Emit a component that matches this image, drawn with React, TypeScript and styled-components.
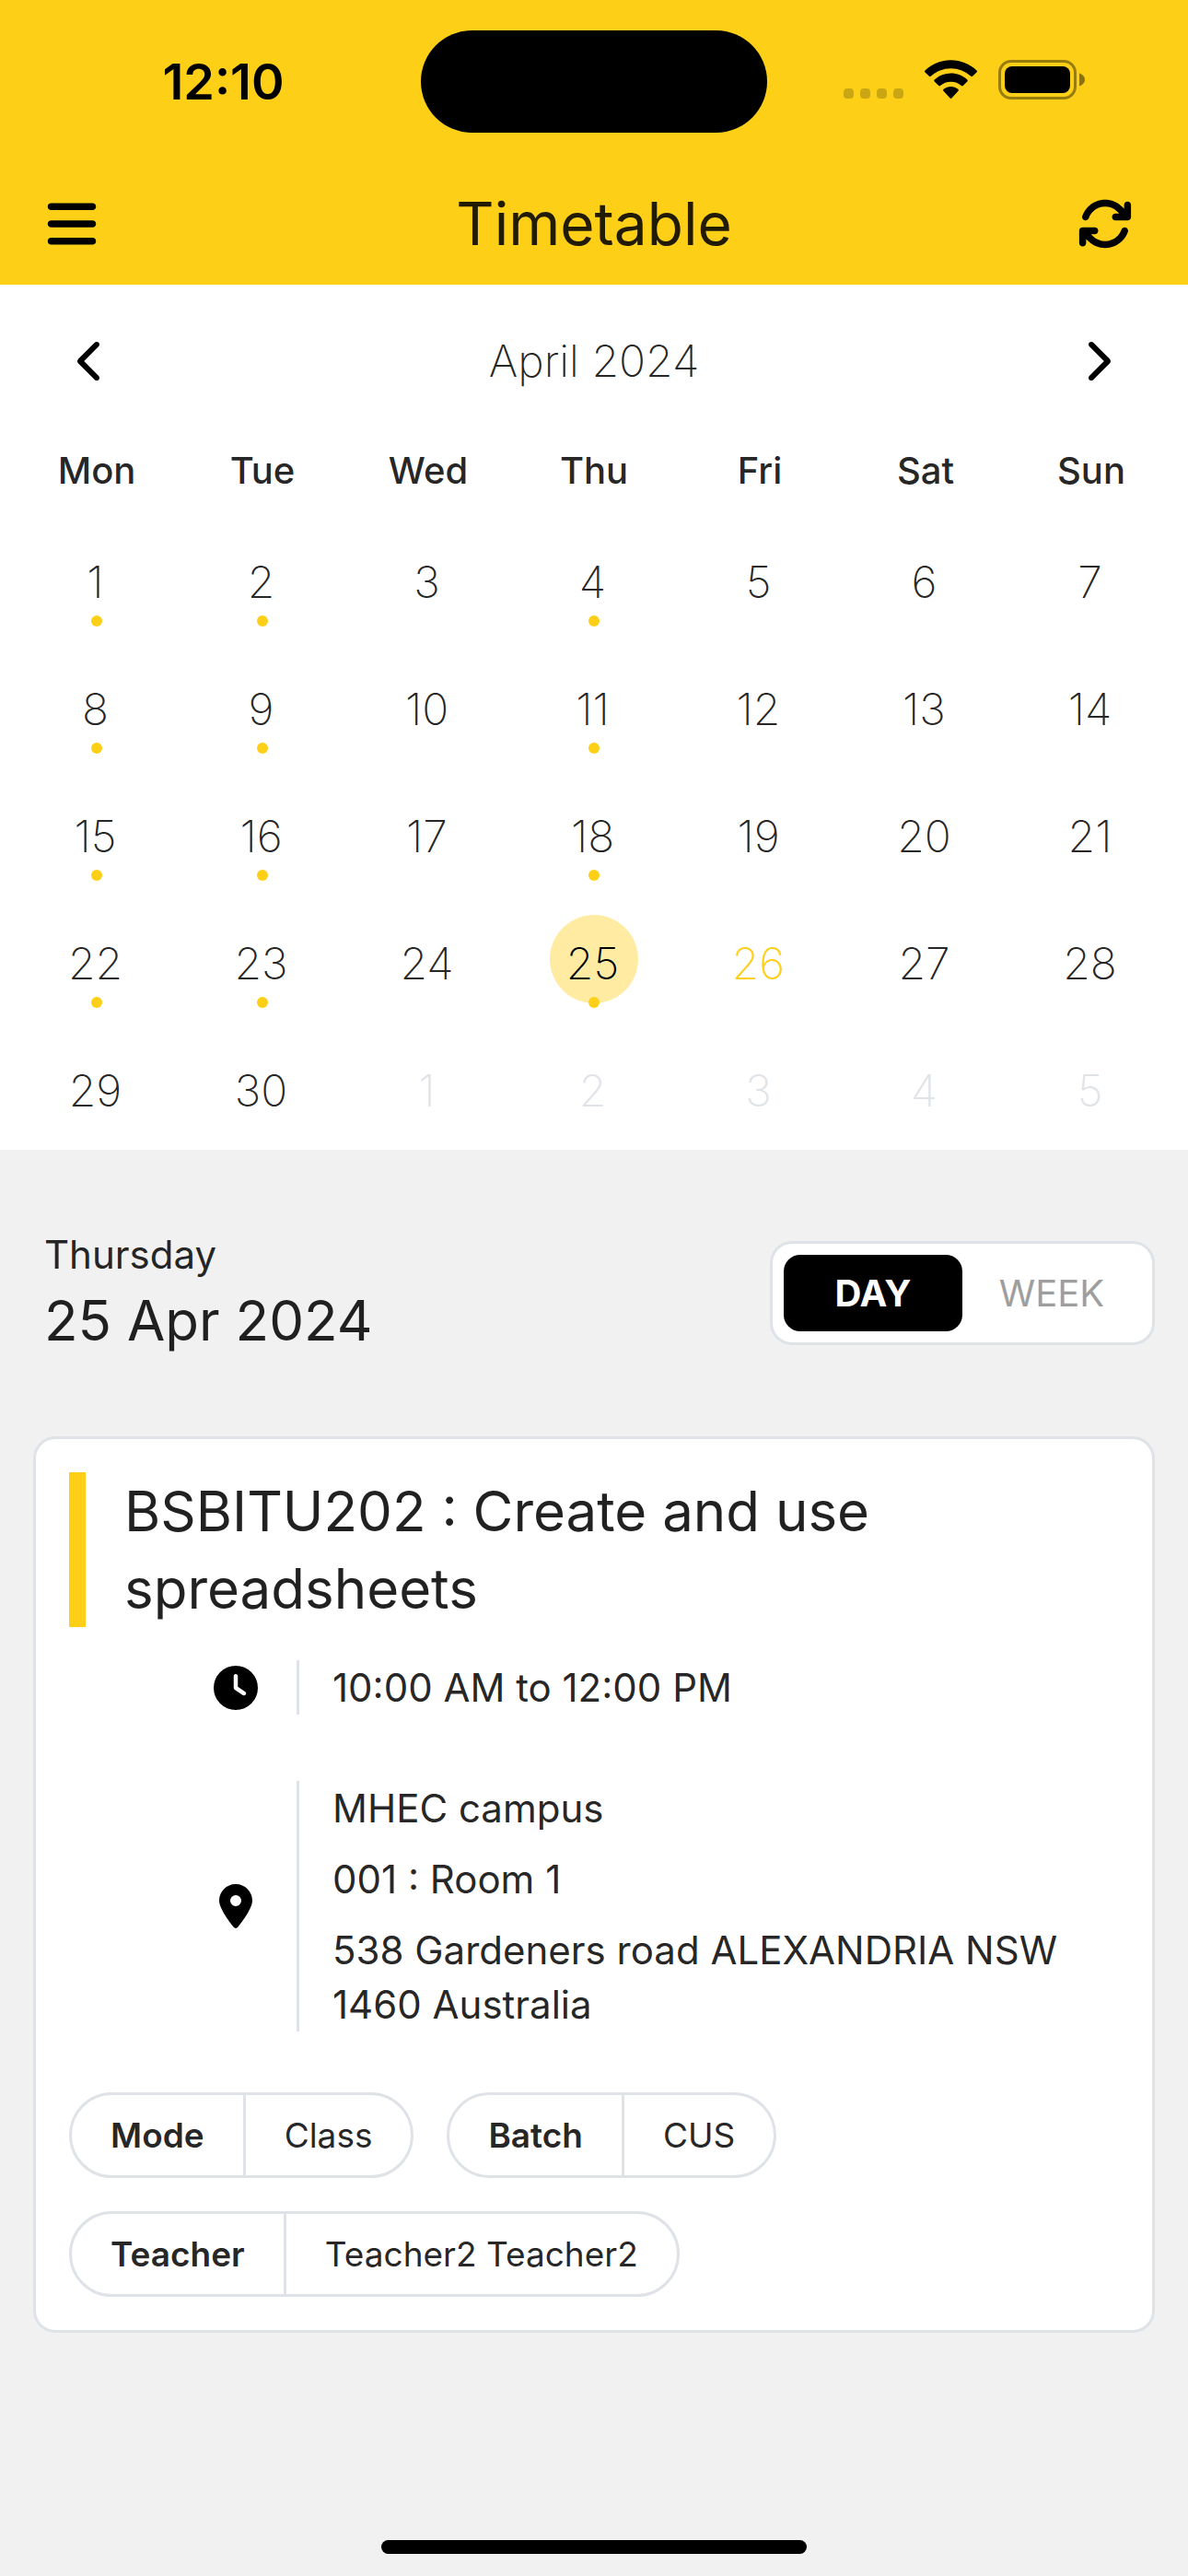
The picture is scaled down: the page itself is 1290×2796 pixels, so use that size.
import React, { useState } from "react";
import styled, { createGlobalStyle, css } from "styled-components";
import {
  FaArrowsRotate,
  FaBars,
  FaChevronLeft,
  FaChevronRight,
  FaClock,
  FaLocationDot,
} from "react-icons/fa6";

const color = {
  brand: "#fdd017",
  brandSoft: "#ffeca2",
  ink: "rgba(0, 0, 0, 0.87)",
  muted: "#9e9e9e",
  line: "#dfe3e7",
  page: "#f1f1f1",
};

const GlobalStyle = createGlobalStyle`
  *, *::before, *::after { box-sizing: border-box; }
  body {
    margin: 0;
    background: ${color.page};
    color: ${color.ink};
    font-family: Inter, "Noto Sans", sans-serif;
    font-size: 42px;
    line-height: 59px;
  }
  button {
    margin: 0;
    padding: 0;
    border: 0;
    background: none;
    color: inherit;
    font: inherit;
    cursor: pointer;
  }
`;

const Screen = styled.div`
  display: flex;
  flex-direction: column;
  min-height: 100vh;
`;

const Header = styled.header`
  background: ${color.brand};
`;

const StatusBar = styled.div`
  display: grid;
  grid-template-columns: 1fr 376px 1fr;
  align-items: center;
  justify-items: center;
  height: 177px;
`;

const Clock = styled.time`
  padding-left: 28px;
  color: #000;
  font-size: 54px;
  font-weight: 600;
`;

const Island = styled.div`
  width: 100%;
  height: 111px;
  border-radius: 56px;
  background: #000;
`;

const StatusIcons = styled.svg`
  display: block;
  width: 262px;
  height: 44px;
  margin: 0 30px 4px 0;
`;

const AppBar = styled.div`
  display: grid;
  grid-template-columns: 1fr auto 1fr;
  align-items: center;
  height: 132px;
  padding: 0 60px 0 48px;

  & > :first-child {
    justify-self: start;
  }

  & > :last-child {
    justify-self: end;
  }
`;

const IconButton = styled.button<{ $size: number }>`
  display: grid;
  place-items: center;
  color: #000;
  font-size: ${(p) => p.$size}px;
  line-height: 1;
`;

const Title = styled.h1`
  margin: 0;
  padding-left: 12px;
  font-size: 64px;
  font-weight: 400;
  line-height: 84px;
`;

const Calendar = styled.section`
  padding: 0 15px;
  background: #fff;
`;

const MonthBar = styled.div`
  display: flex;
  align-items: center;
  justify-content: space-between;
  height: 165px;
  padding: 0 60px;
`;

const Month = styled.h2`
  margin: 0;
  font-size: 48px;
  font-weight: 200;
`;

const Days = styled.table`
  width: 100%;
  table-layout: fixed;
  border-collapse: collapse;
`;

const Weekday = styled.th`
  height: 84px;
  padding: 0 0 12px;
  font-size: 40px;
  font-weight: 500;
`;

const DayCell = styled.td`
  height: 138px;
  padding: 21px 0;
`;

type DayKind = "plain" | "selected" | "today" | "outside";

const dayColor: Record<DayKind, string> = {
  plain: color.ink,
  selected: "#000",
  today: color.brand,
  outside: color.line,
};

const DayButton = styled.button<{ $kind: DayKind; $event: boolean }>`
  position: relative;
  display: grid;
  place-items: center;
  width: 96px;
  height: 96px;
  margin: 0 auto;
  padding: 8px 3px 0 0;
  border-radius: 50%;
  background: ${(p) => (p.$kind === "selected" ? color.brandSoft : "transparent")};
  color: ${(p) => dayColor[p.$kind]};
  font-size: 48px;
  font-weight: 200;
  ${(p) =>
    p.$event &&
    css`
      &::after {
        content: "";
        position: absolute;
        top: 89px;
        left: 42px;
        width: 12px;
        height: 12px;
        border-radius: 50%;
        background: ${color.brand};
      }
    `}
`;

const Agenda = styled.main`
  display: flex;
  flex-direction: column;
  padding: 0 36px;
`;

const AgendaHeader = styled.div`
  display: flex;
  align-items: center;
  justify-content: space-between;
  padding: 84px 0 84px 12px;
`;

const DayName = styled.p`
  margin: 0;
`;

const FullDate = styled.p`
  margin: 0;
  font-size: 60px;
  line-height: 84px;
`;

const Toggle = styled.div`
  display: flex;
  padding: 12px;
  border: 3px solid ${color.line};
  border-radius: 24px;
  background: #fff;
`;

const ToggleButton = styled.button<{ $active: boolean }>`
  width: 194px;
  height: 83px;
  border-radius: 18px;
  background: ${(p) => (p.$active ? "#000" : "transparent")};
  color: ${(p) => (p.$active ? "#fff" : color.muted)};
  font-size: 40px;
  font-weight: ${(p) => (p.$active ? 700 : 400)};
`;

const Card = styled.article`
  padding: 36px;
  border: 3px solid ${color.line};
  border-radius: 24px;
  background: #fff;
`;

const Course = styled.h3`
  margin: 0 0 36px;
  padding: 0 36px 0 42px;
  border-left: 18px solid ${color.brand};
  font-size: 60px;
  font-weight: 400;
  line-height: 84px;
`;

const Detail = styled.div`
  display: flex;
  align-items: center;
  gap: 42px;
  margin-bottom: 72px;
  padding-left: 157px;

  & > svg {
    flex: none;
    color: #000;
    font-size: 48px;
  }
`;

const DetailText = styled.div`
  display: grid;
  gap: 18px;
  flex: 1;
  padding-left: 36px;
  border-left: 3px solid ${color.line};

  p {
    margin: 0;
  }
`;

const Chips = styled.dl`
  display: flex;
  flex-wrap: wrap;
  gap: 36px;
  margin: -6px 0 0;
`;

const Chip = styled.div`
  display: flex;
  border: 3px solid ${color.line};
  border-radius: 47px;
  font-size: 37px;
  line-height: 87px;
`;

const ChipLabel = styled.dt`
  padding: 0 42px;
  border-right: 3px solid ${color.line};
  font-weight: 600;
`;

const ChipValue = styled.dd`
  margin: 0;
  padding: 0 42px;
`;

const HomeIndicator = styled.div`
  width: 462px;
  height: 15px;
  margin: auto auto 24px;
  border-radius: 8px;
  background: #000;
`;

const weekdays = ["Mon", "Tue", "Wed", "Thu", "Fri", "Sat", "Sun"];
const TODAY = 26;
const DAYS_IN_MONTH = 30;
const eventColumns = [0, 1, 3];

const weeks = Array.from({ length: 5 }, (_, w) =>
  Array.from({ length: 7 }, (_, d) => w * 7 + d + 1)
);

const chips = [
  { label: "Mode", value: "Class" },
  { label: "Batch", value: "CUS" },
  { label: "Teacher", value: "Teacher2 Teacher2" },
];

function SystemIcons() {
  return (
    <StatusIcons viewBox="0 0 262 44" aria-hidden="true">
      {[0, 18, 36, 54].map((x) => (
        <rect key={x} x={x} y="31" width="11" height="11" rx="4" fillOpacity="0.2" />
      ))}
      <g transform="translate(88 0)">
        <path d="M28.5 0.3c10.6 0 20.4 4.1 28 11.1.6.6.6 1.4 0 2l-4.5 4.4c-.5.5-1.2.5-1.7 0a32 32 0 0 0-43.6 0c-.5.5-1.2.5-1.7 0L.5 13.4c-.6-.6-.6-1.4 0-2 7.6-7 17.4-11.1 28-11.1z" />
        <path d="M28.5 14.6c6.7 0 12.9 2.5 17.8 6.9.6.6.6 1.4 0 2l-4.6 4.5c-.5.5-1.2.5-1.7 0a17.6 17.6 0 0 0-23 0c-.5.5-1.2.5-1.7 0l-4.6-4.5c-.6-.6-.6-1.4 0-2 4.900-4.400 11.100-6.900 17.800-6.900z" />
        <path d="M28.5 28.9c3 0 5.7 1 7.9 2.9.6.5.6 1.3.1 1.9l-7.1 7.8c-.5.5-1.3.5-1.8 0l-7.1-7.8c-.5-.6-.5-1.4.1-1.9 2.2-1.9 4.9-2.9 7.9-2.9z" />
      </g>
      <rect x="169.5" y="1.5" width="82" height="40" rx="12.5" fill="none" stroke="#000" strokeOpacity="0.4" strokeWidth="3" />
      <rect x="175" y="7" width="71" height="29" rx="8" />
      <path d="M256 14.5c3.6 1.2 6 3.9 6 7s-2.4 5.8-6 7z" fillOpacity="0.45" />
    </StatusIcons>
  );
}

export default function App() {
  const [selected, setSelected] = useState(25);
  const [view, setView] = useState("DAY");

  const kindOf = (n: number): DayKind => {
    if (n > DAYS_IN_MONTH) return "outside";
    if (n === selected) return "selected";
    return n === TODAY ? "today" : "plain";
  };

  return (
    <Screen>
      <GlobalStyle />
      <Header>
        <StatusBar>
          <Clock>12:10</Clock>
          <Island />
          <SystemIcons />
        </StatusBar>
        <AppBar>
          <IconButton $size={60} aria-label="Menu">
            <FaBars />
          </IconButton>
          <Title>Timetable</Title>
          <IconButton $size={60} aria-label="Refresh">
            <FaArrowsRotate />
          </IconButton>
        </AppBar>
      </Header>

      <Calendar>
        <MonthBar>
          <IconButton $size={48} aria-label="Previous month">
            <FaChevronLeft />
          </IconButton>
          <Month>April 2024</Month>
          <IconButton $size={48} aria-label="Next month">
            <FaChevronRight />
          </IconButton>
        </MonthBar>
        <Days>
          <thead>
            <tr>
              {weekdays.map((d) => (
                <Weekday key={d} scope="col">
                  {d}
                </Weekday>
              ))}
            </tr>
          </thead>
          <tbody>
            {weeks.map((week, w) => (
              <tr key={w}>
                {week.map((n, d) => (
                  <DayCell key={n}>
                    <DayButton
                      $kind={kindOf(n)}
                      $event={w < 4 && eventColumns.includes(d)}
                      disabled={n > DAYS_IN_MONTH}
                      onClick={() => setSelected(n)}
                    >
                      {n > DAYS_IN_MONTH ? n - DAYS_IN_MONTH : n}
                    </DayButton>
                  </DayCell>
                ))}
              </tr>
            ))}
          </tbody>
        </Days>
      </Calendar>

      <Agenda>
        <AgendaHeader>
          <div>
            <DayName>Thursday</DayName>
            <FullDate>25 Apr 2024</FullDate>
          </div>
          <Toggle role="group" aria-label="View">
            {["DAY", "WEEK"].map((v) => (
              <ToggleButton
                key={v}
                $active={view === v}
                aria-pressed={view === v}
                onClick={() => setView(v)}
              >
                {v}
              </ToggleButton>
            ))}
          </Toggle>
        </AgendaHeader>

        <Card>
          <Course>BSBITU202 : Create and use spreadsheets</Course>
          <Detail>
            <FaClock />
            <DetailText>
              <p>10:00 AM to 12:00 PM</p>
            </DetailText>
          </Detail>
          <Detail>
            <FaLocationDot />
            <DetailText>
              <p>MHEC campus</p>
              <p>001 : Room 1</p>
              <p>538 Gardeners road ALEXANDRIA NSW 1460 Australia</p>
            </DetailText>
          </Detail>
          <Chips>
            {chips.map((c) => (
              <Chip key={c.label}>
                <ChipLabel>{c.label}</ChipLabel>
                <ChipValue>{c.value}</ChipValue>
              </Chip>
            ))}
          </Chips>
        </Card>
      </Agenda>

      <HomeIndicator />
    </Screen>
  );
}
